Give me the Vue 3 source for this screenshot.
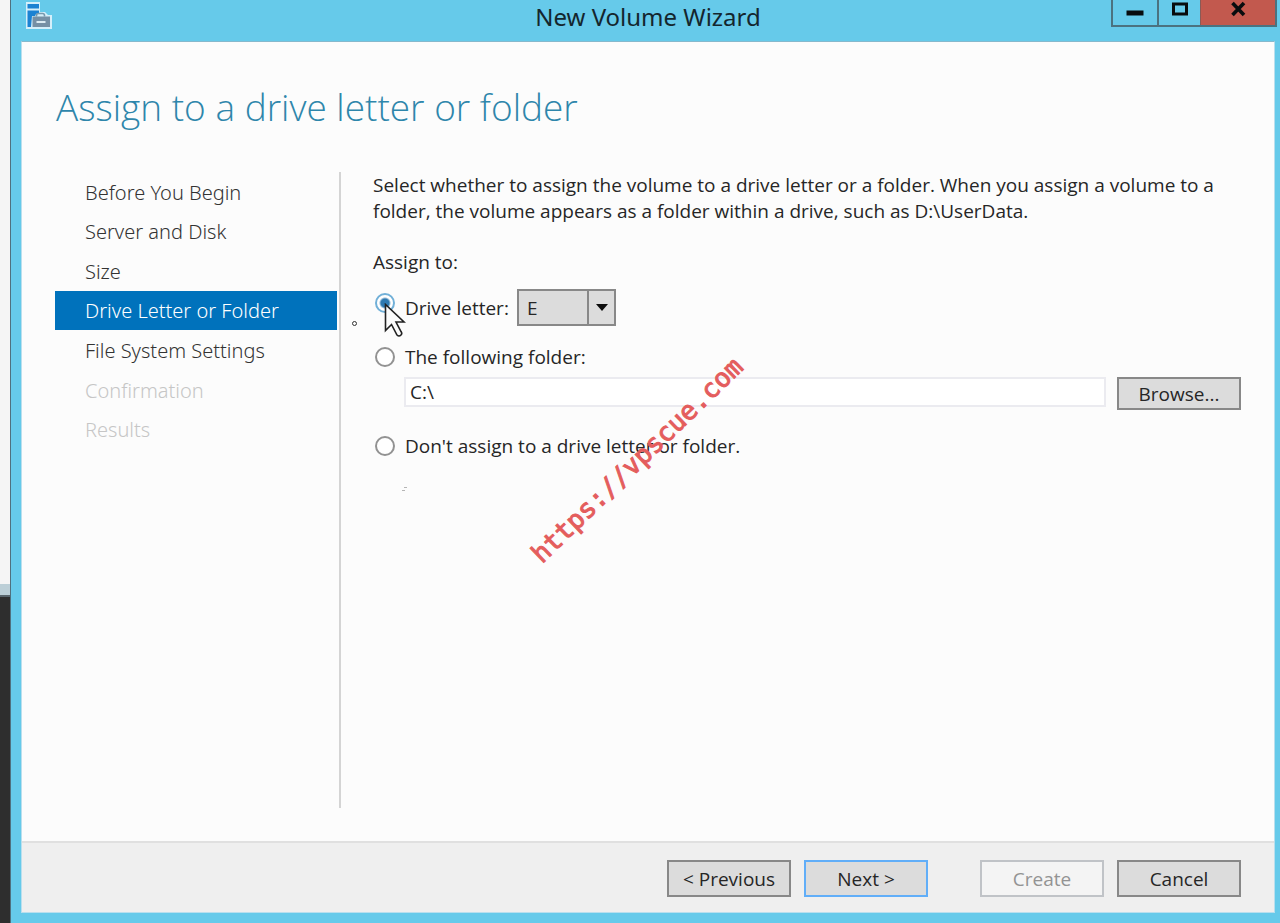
<script setup>
import { ref } from 'vue'

const steps = [
  { label: 'Before You Begin' },
  { label: 'Server and Disk' },
  { label: 'Size' },
  { label: 'Drive Letter or Folder', current: true },
  { label: 'File System Settings' },
  { label: 'Confirmation', disabled: true },
  { label: 'Results', disabled: true },
]
const target = ref('letter')
const letter = ref('E')
const folder = ref('C:\\')
</script>

<template>
  <div class="desktop">
    <div class="window">
      <header class="titlebar">
        <svg class="app-icon" width="28" height="28" viewBox="0 0 28 28" aria-hidden="true">
          <path d="M1 0h14v10h5l3 3h4v14H1z" fill="#d5effa" />
          <path d="M2.500 2H14v4.500H2.500zM2.500 8.500H14v2.500l-3 1-1 2H7L6 25H2.500z" fill="#1c82d2" />
          <path d="M11.500 14.500v-1q0-2 2-2h4q2 0 2 2v1" fill="none" stroke="#7899ae" stroke-width="1.600" />
          <path d="M7.500 14.500h17.500V25H7.500z" fill="#7690a5" />
          <path d="M11.500 19h9v2h-9z" fill="#dcebf2" />
        </svg>
        <div class="title">New Volume Wizard</div>
        <div class="controls">
          <button type="button" class="ctl min" aria-label="Minimize">
            <svg width="18" height="18" viewBox="0 0 18 18"><path d="M.5 10.500h17v5H.5z" fill="#080c0e" /></svg>
          </button>
          <button type="button" class="ctl max" aria-label="Maximize">
            <svg width="18" height="18" viewBox="0 0 18 18"><path d="M2.500 4h13v10h-13z" fill="none" stroke="#080c0e" stroke-width="3" /></svg>
          </button>
          <button type="button" class="ctl close" aria-label="Close">
            <svg width="18" height="18" viewBox="0 0 18 18"><path d="M3.500 3L15 15M15 3L3.500 15" fill="none" stroke="#080c0e" stroke-width="3.600" /></svg>
          </button>
        </div>
      </header>

      <div class="client">
        <h1>Assign to a drive letter or folder</h1>
        <div class="columns">
          <nav aria-label="Wizard steps">
            <ol>
              <li v-for="s in steps" :key="s.label" :class="{ current: s.current, disabled: s.disabled }">{{ s.label }}</li>
            </ol>
          </nav>
          <main>
            <p class="intro">Select whether to assign the volume to a drive letter or a folder. When you assign a volume to a<br />folder, the volume appears as a folder within a drive, such as D:\UserData.</p>
            <p class="assign">Assign to:</p>
            <div class="row letter-row">
              <span class="radio-wrap">
                <input id="r-letter" v-model="target" type="radio" name="target" value="letter" />
                <svg class="pointer" width="22" height="36" viewBox="0 0 22 36" aria-hidden="true">
                  <path d="M1.500 1.500v26l6-6 5.500 10.500q2 2 4 0 1.500-1.500 0-3.500l-5-9.500h8z" fill="#fcfcfc" stroke="#222" stroke-width="1.600" />
                </svg>
              </span>
              <label for="r-letter">Drive letter:</label>
              <span class="combo">
                <select v-model="letter" aria-label="Drive letter value">
                  <option>E</option>
                </select>
                <svg width="12" height="8" viewBox="0 0 12 8" aria-hidden="true"><path d="M0 1h12L6 8z" fill="#0c0c0c" /></svg>
              </span>
            </div>
            <div class="row folder-row">
              <input id="r-folder" v-model="target" type="radio" name="target" value="folder" />
              <label for="r-folder">The following folder:</label>
            </div>
            <div class="path-row">
              <input v-model="folder" class="path" type="text" aria-label="Folder path" />
              <button type="button" class="btn browse">Browse...</button>
            </div>
            <div class="row none-row">
              <input id="r-none" v-model="target" type="radio" name="target" value="none" />
              <label for="r-none">Don't assign to a drive letter or folder.</label>
            </div>
            <i class="speck"></i>
            <svg class="dashes" width="8" height="6" viewBox="0 0 8 6" aria-hidden="true">
              <path d="M3 1.500h3M1 4.500h3" stroke="#b5b5b5" stroke-width="1" />
            </svg>
            <span class="watermark">https://vpscue.com</span>
          </main>
        </div>
        <footer>
          <button type="button" class="btn">&lt; Previous</button>
          <button type="button" class="btn primary">Next &gt;</button>
          <button type="button" class="btn create" disabled>Create</button>
          <button type="button" class="btn">Cancel</button>
        </footer>
      </div>
    </div>
  </div>
</template>

<style>
body {
  margin: 0;
}
</style>

<style scoped>
* {
  box-sizing: border-box;
}
.desktop {
  min-height: 100vh;
  display: flex;
  padding-left: 10px;
  background: linear-gradient(#f5f5f5 584px, #bccfd7 584px, #bccfd7 595px, #59656c 595px, #59656c 597px, #2e2e2e 597px);
  font-family: 'Open Sans', 'Noto Sans', sans-serif;
  font-size: 19px;
  color: #262626;
}
.window {
  flex: 1;
  display: flex;
  flex-direction: column;
  padding: 0 5px 10px 10px;
  border-left: 1px solid #50707e;
  background: #66caea;
}
.titlebar {
  height: 41px;
  display: grid;
  grid-template-columns: 1fr auto 1fr;
  align-items: start;
}
.app-icon {
  margin: 2px 0 0 4px;
}
.title {
  font-family: 'Noto Sans', sans-serif;
  font-size: 24px;
  line-height: 34px;
  color: #14262e;
}
.controls {
  justify-self: end;
  display: flex;
  height: 27px;
  margin-right: -2px;
  border: 2px solid #4b7280;
  border-top: 0;
}
.ctl {
  display: flex;
  justify-content: center;
  align-items: flex-start;
  padding: 0;
  border: 0;
  background: none;
}
.min {
  width: 44px;
}
.max {
  width: 43px;
  border-left: 2px solid #4b7280;
}
.close {
  width: 75px;
  border-left: 1px solid #8a5a55;
  background: #c2594e;
}
.client {
  flex: 1;
  display: flex;
  flex-direction: column;
  border: 1px solid #b9dfee;
  border-top-color: #86b9cd;
  background: #fcfcfc;
}
h1 {
  margin: 0;
  padding: 38px 34px 0;
  font-size: 37px;
  line-height: 54px;
  font-weight: 300;
  color: #2e86ab;
}
.columns {
  flex: 1;
  display: flex;
  padding: 38px 33px 33px;
}
nav {
  width: 286px;
  flex: none;
  border-right: 2px solid #d4d4d4;
}
ol {
  display: grid;
  grid-auto-rows: 1fr;
  min-height: 277px;
  margin: 0 2px 0 0;
  padding: 0;
  list-style: none;
}
li {
  display: flex;
  align-items: center;
  padding: 2px 0 0 30px;
  font-family: 'Noto Sans', sans-serif;
  font-size: 20px;
  line-height: 28px;
  font-weight: 300;
  color: #333;
}
li.current {
  background: #0072bc;
  color: #fff;
}
li.disabled {
  color: #c6c6c6;
}
main {
  position: relative;
  flex: 1;
  padding-left: 32px;
}
p {
  margin: 0;
  line-height: 26px;
}
.intro {
  white-space: nowrap;
}
.assign {
  margin-top: 25px;
}
.row {
  display: flex;
  align-items: center;
}
.row input {
  appearance: none;
  flex: none;
  width: 20px;
  height: 20px;
  margin: 0 10px 0 2px;
  border: 2px solid #929292;
  border-radius: 50%;
  background: #fff;
}
.row input:checked {
  border-color: #71b0d8;
  background: radial-gradient(circle, #2e79b0 4px, #fff 6px);
}
.radio-wrap {
  position: relative;
  display: flex;
  padding-bottom: 10px;
}
.pointer {
  position: absolute;
  left: 11px;
  top: 10px;
}
.letter-row {
  margin-top: 14px;
}
.combo {
  position: relative;
  display: flex;
  margin-left: 8px;
}
select {
  appearance: none;
  width: 99px;
  height: 37px;
  padding: 0 0 0 8px;
  border: 2px solid #888;
  border-radius: 0;
  background: linear-gradient(#888, #888) right 25px top 0 / 2px 100% no-repeat #dcdcdc;
  font: inherit;
  color: inherit;
}
.combo svg {
  position: absolute;
  right: 8px;
  top: 14px;
}
.folder-row {
  margin-top: 17px;
  height: 28px;
}
.path-row {
  display: flex;
  gap: 11px;
  margin: 6px 0 0 31px;
}
.path {
  flex: 1;
  min-width: 0;
  height: 30px;
  padding: 0 4px;
  border: 2px solid #ebebf0;
  background: #fff;
  font: inherit;
  color: inherit;
}
.btn {
  width: 124px;
  height: 37px;
  padding: 0;
  border: 2px solid #888;
  background: #dcdcdc;
  font: inherit;
  color: inherit;
}
.btn.browse {
  height: 33px;
}
.none-row {
  margin-top: 22px;
  height: 28px;
}
footer {
  display: flex;
  justify-content: flex-end;
  gap: 13px;
  padding: 17px 33px 15px;
  border-top: 2px solid #e0e0e0;
  background: #efefef;
}
.btn.primary {
  border-color: #61aef8;
}
.btn.create {
  margin-left: 39px;
  border-color: #c0c3c7;
  background: #f4f4f4;
  color: #939393;
}
.speck {
  position: absolute;
  left: 11px;
  top: 149px;
  width: 5px;
  height: 5px;
  border: 1px solid #333;
  border-radius: 50%;
}
.dashes {
  position: absolute;
  left: 60px;
  top: 314px;
}
.watermark {
  position: absolute;
  left: 296px;
  top: 288px;
  width: 0;
  display: flex;
  justify-content: center;
  align-items: center;
  height: 0;
  white-space: nowrap;
  font-family: 'DejaVu Sans Mono', monospace;
  font-size: 26px;
  color: #e45d5d;
  -webkit-text-stroke: 1px #e45d5d;
  transform: rotate(-44deg);
}
</style>
